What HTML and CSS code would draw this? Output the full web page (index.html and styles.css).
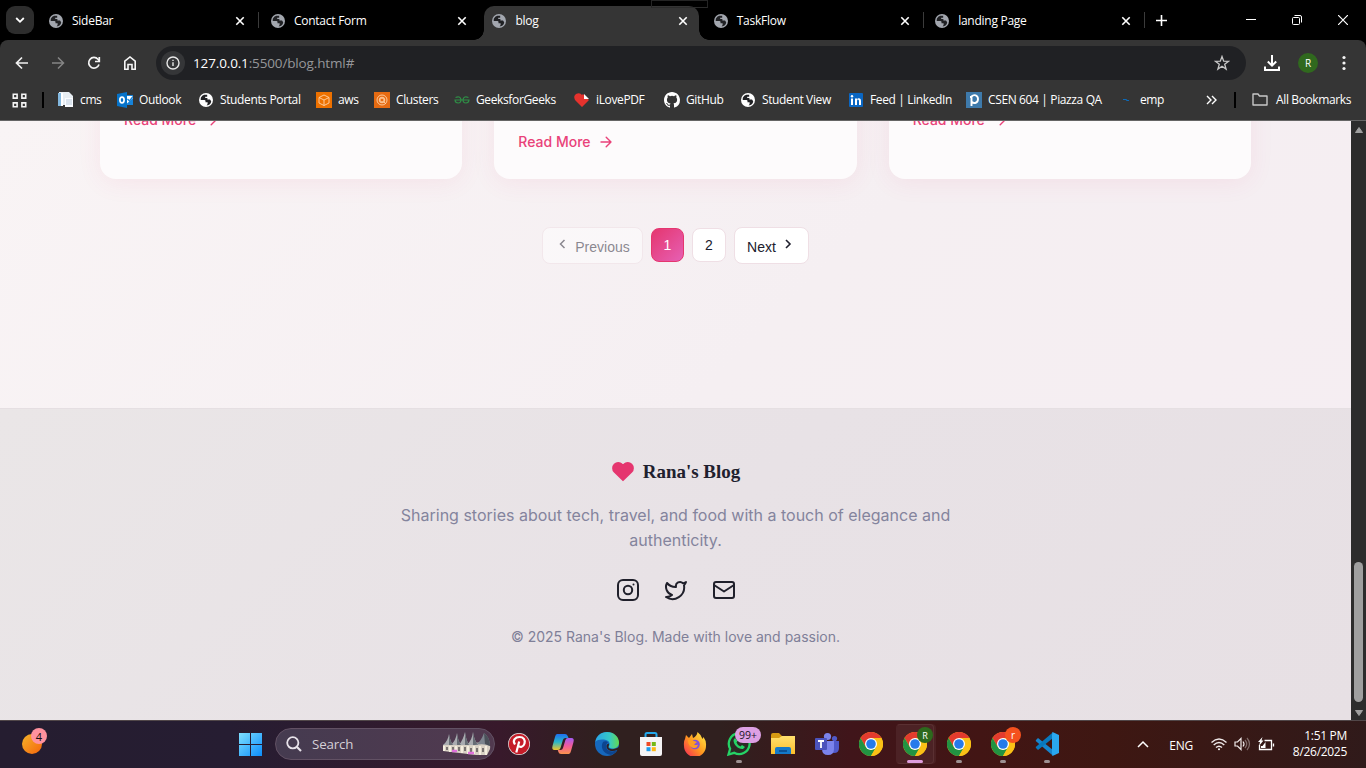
FILE: index.html
```html
<!DOCTYPE html>
<html lang="en">
<head>
<meta charset="utf-8">
<title>blog</title>
<link rel="stylesheet" href="styles.css">
</head>
<body>
<svg class="defs" width="0" height="0" aria-hidden="true">
  <defs>
    <linearGradient id="win" x1="0" y1="0" x2="1" y2="1"><stop offset="0" stop-color="#7fe0ff"/><stop offset="1" stop-color="#0c8dfb"/></linearGradient>
    <linearGradient id="edge" x1="0" y1="0" x2="1" y2="0"><stop offset="0" stop-color="#2aa5e8"/><stop offset=".6" stop-color="#35c9c5"/><stop offset="1" stop-color="#64d950"/></linearGradient>
    <linearGradient id="copA" x1="0" y1="0" x2="0" y2="1"><stop offset="0" stop-color="#1e6ff0"/><stop offset=".5" stop-color="#28b7c9"/><stop offset="1" stop-color="#f1c52a"/></linearGradient>
    <linearGradient id="copB" x1="0" y1="0" x2="0" y2="1"><stop offset="0" stop-color="#a35bf5"/><stop offset=".5" stop-color="#f25b9a"/><stop offset="1" stop-color="#fb934c"/></linearGradient>
    <linearGradient id="fox" x1="1" y1="0" x2="0" y2="1"><stop offset="0" stop-color="#fff14a"/><stop offset=".5" stop-color="#ff9a1f"/><stop offset="1" stop-color="#f5205a"/></linearGradient>
    <linearGradient id="orange" x1="0" y1="0" x2="1" y2="1"><stop offset="0" stop-color="#f5b52a"/><stop offset="1" stop-color="#f4640c"/></linearGradient>
    <linearGradient id="folder" x1="0" y1="0" x2="0" y2="1"><stop offset="0" stop-color="#ffe06f"/><stop offset="1" stop-color="#fcbf2a"/></linearGradient>
  </defs>
  <symbol id="globe" viewBox="0 0 14 14"><circle cx="7" cy="7" r="7" fill="currentColor"/><path class="land" d="M5.2 1.8Q3 2.5 1.8 4.800L1.700 7H5.400Q6.500 7 6.500 8v1.200H8.600V11l-1 1.500Q11.800 12 12.200 8.200L11 6.600H8.400V5H6.200V3.800H8.200V1.700Z"/></symbol>
  <symbol id="x" viewBox="0 0 10 10"><path d="M1.300 1.300 8.700 8.700M8.700 1.300 1.300 8.700" fill="none" stroke="#fff" stroke-width="1.600"/></symbol>
  <symbol id="chrome" viewBox="0 0 24 24"><circle cx="12" cy="12" r="12" fill="#fbc116"/><path d="M1.600 6A12 12 0 0 1 22.400 6H12L6.800 15Z" fill="#e33b2e"/><path d="M1.600 6A12 12 0 0 0 12 24L17.200 15 12 18 6.800 15Z" fill="#229342"/><path d="M12 6H22.400A12 12 0 0 1 12 24L17.200 15Z" fill="#fbc116"/><circle cx="12" cy="12" r="6" fill="#fff"/><circle cx="12" cy="12" r="4.800" fill="#267aea"/></symbol>
  <symbol id="arrow" viewBox="0 0 12 12"><path d="M1 6h10M6.200 1.200 11 6l-4.800 4.800" fill="none" stroke="currentColor" stroke-width="1.400" stroke-linecap="round" stroke-linejoin="round"/></symbol>
</svg>

<header class="tabs">
  <button class="tab-search"><svg width="10" height="8" viewBox="0 0 10 8"><path d="m1.200 2 3.800 3.800L8.800 2" fill="none" stroke="#fff" stroke-width="1.800"/></svg></button>
  <div class="tab"><svg class="fav"><use href="#globe"/></svg><span>SideBar</span><svg class="close"><use href="#x"/></svg></div>
  <div class="tab no-rule"><svg class="fav"><use href="#globe"/></svg><span>Contact Form</span><svg class="close"><use href="#x"/></svg></div>
  <div class="tab active"><svg class="fav"><use href="#globe"/></svg><span>blog</span><svg class="close"><use href="#x"/></svg></div>
  <div class="tab"><svg class="fav"><use href="#globe"/></svg><span>TaskFlow</span><svg class="close"><use href="#x"/></svg></div>
  <div class="tab"><svg class="fav"><use href="#globe"/></svg><span>landing Page</span><svg class="close"><use href="#x"/></svg></div>
  <svg class="plus" width="11" height="11" viewBox="0 0 11 11"><path d="M5.500 0v11M0 5.500h11" stroke="#fff" stroke-width="1.600"/></svg>
  <div class="window-buttons">
    <svg width="10" height="10"><path d="M0 4.500h10" stroke="#fff"/></svg>
    <svg width="10" height="10" viewBox="0 0 10 10" fill="none" stroke="#fff"><rect x=".5" y="2.500" width="7" height="7" rx="1"/><path d="M2.500.5H8Q9.500.5 9.500 2V7.500"/></svg>
    <svg width="10" height="10" viewBox="0 0 10 10"><path d="m0 0 10 10M10 0 0 10" stroke="#fff" stroke-width="1.200"/></svg>
  </div>
  <div class="grip"></div>
</header>

<div class="toolbar">
  <div class="nav-row">
    <svg width="14" height="14" viewBox="0 0 14 14" fill="none" stroke="#f0f0f0" stroke-width="1.700"><path d="M13 7H1.800M7 1.500 1.500 7 7 12.500"/></svg>
    <svg width="14" height="14" viewBox="0 0 14 14" fill="none" stroke="#858585" stroke-width="1.500"><path d="M1 7h11.500M7 1.500 12.500 7 7 12.500"/></svg>
    <svg width="14" height="14" viewBox="0 0 14 14" fill="none" stroke="#f5f5f5" stroke-width="1.700"><path d="M12 8.500A5.300 5.300 0 1 1 11 3.300L12.500 5"/><path d="M12.300 1v4.500H8"/></svg>
    <svg width="14" height="14" viewBox="0 0 14 14" fill="none" stroke="#f5f5f5" stroke-width="1.600"><path d="M1.800 13.200V5.200L7 1l5.200 4.200v8H9V8.500H5v4.700Z"/></svg>
    <div class="omnibox">
      <span class="info"><svg width="14" height="14" viewBox="0 0 14 14"><circle cx="7" cy="7" r="6" fill="none" stroke="#e8e8e8" stroke-width="1.400"/><path d="M7 6.200V10M7 3.700V5.100" stroke="#e8e8e8" stroke-width="1.400"/></svg></span>
      <span class="url"><b>127.0.0.1</b>:5500/blog.html#</span>
      <svg class="star" width="16" height="16" viewBox="0 0 16 16"><path d="m8 1.500 1.700 4.700 4.900.1-3.900 3 1.400 4.800L8 11.300l-4.100 2.800 1.400-4.800-3.900-3 4.900-.1Z" fill="none" stroke="#c7c7c7" stroke-width="1.300"/></svg>
    </div>
    <svg width="16" height="17" viewBox="0 0 16 17" fill="none" stroke="#fff" stroke-width="2"><path d="M8 0v10.500M3.800 6.500 8 10.700l4.200-4.200M1 11.500V15h14v-3.500"/></svg>
    <span class="profile">R</span>
    <svg width="4" height="16" fill="#f5f5f5"><circle cx="2" cy="2.500" r="1.600"/><circle cx="2" cy="8" r="1.600"/><circle cx="2" cy="13.500" r="1.600"/></svg>
  </div>
  <nav class="bookmarks">
    <svg width="15" height="15" viewBox="0 0 15 15" fill="none" stroke="#f5f5f5" stroke-width="1.600"><path d="M1.300 1.300h3.800v3.800H1.300zM9.900 1.300h3.800v3.800H9.900zM1.300 9.900h3.800v3.800H1.300zM9.900 9.900h3.800v3.800H9.900z"/></svg>
    <i class="rule"></i>
    <a><svg width="16" height="16" viewBox="0 0 16 16"><path d="M1 0h10l4 4v9H1Z" fill="#e7edf2"/><path d="M0 1h4v13H0z" fill="#82b7de"/><path d="M3 1h2v13H3z" fill="#fff"/><path d="M7 6h8v9H7z" fill="#fafcff"/><path d="M8 8h6M8 10h6M8 12h6" stroke="#bacada"/></svg><span>cms</span></a>
    <a><svg width="16" height="16" viewBox="0 0 16 16"><path d="M0 2 10 0v16L0 14Z" fill="#0673c9"/><path d="M10 3h6v10h-6" fill="#fff"/><path d="M10 11.500 16 6v7h-6M10 3h6v1h-6" fill="#1683da"/><path d="m10.500 7 2 2L16 4.500" fill="none" stroke="#1683da" stroke-width="1.300"/><ellipse cx="5" cy="8" rx="2.100" ry="2.800" fill="none" stroke="#fff" stroke-width="1.700"/></svg><span>Outlook</span></a>
    <a><svg class="fav light"><use href="#globe"/></svg><span>Students Portal</span></a>
    <a><svg width="16" height="16" viewBox="0 0 16 16"><path fill="#ed7100" d="M0 0h16v16H0z"/><path d="m8 3 5 2.500v5.500l-5 2.500L3 11V5.500ZM3 5.500 8 8l5-2.500M8 8v5.500" fill="none" stroke="#ffd3a8" stroke-width=".9"/></svg><span>aws</span></a>
    <a><svg width="16" height="16" viewBox="0 0 16 16"><path fill="#e66b12" d="M0 0h16v16H0z"/><g fill="none" stroke="#ffd3a8" stroke-width=".9"><circle cx="8" cy="8" r="5"/><circle cx="8" cy="8" r="2.800"/><path d="m8 6 2 1v2L8 10 6 9V7ZM10 10l2 2"/></g></svg><span>Clusters</span></a>
    <a><svg width="16" height="16" viewBox="0 0 16 16" fill="none" stroke="#2f8d46" stroke-width="1.200"><path d="M1.500 5.500Q6 3.500 7 7.500q0 3.500-2.800 3.500Q1.200 11 1 8h14q-.2 3-3.200 3Q9 11 9 7.500q1-4 5.500-2"/></svg><span>GeeksforGeeks</span></a>
    <a><svg width="16" height="16" viewBox="0 0 16 16"><path d="M8 15 1 8Q-1 4 2 2q4-2 6 1l1-1 6 6Z" fill="#e5322d"/><path d="m10 2 5 5h-5Z" fill="#fff"/></svg><span>iLovePDF</span></a>
    <a><svg width="16" height="16" viewBox="0 0 16 16"><path fill="#fff" d="M8 0C3.580 0 0 3.580 0 8c0 3.540 2.290 6.530 5.470 7.590.4.070.55-.17.55-.38 0-.19-.01-.82-.01-1.490-2.010.37-2.530-.49-2.690-.94-.09-.23-.48-.94-.82-1.130-.28-.15-.68-.52-.01-.53.63-.01 1.080.58 1.230.82.72 1.210 1.870.87 2.330.66.07-.52.28-.87.51-1.070-1.780-.2-3.640-.89-3.640-3.950 0-.87.31-1.590.82-2.150-.08-.2-.36-1.020.08-2.120 0 0 .67-.21 2.200.82a7.500 7.500 0 0 1 4 0c1.530-1.040 2.200-.82 2.200-.82.44 1.100.16 1.920.08 2.120.51.56.82 1.270.82 2.150 0 3.070-1.870 3.750-3.650 3.950.29.25.54.73.54 1.480 0 1.070-.01 1.930-.01 2.200 0 .21.15.46.55.38A8 8 0 0 0 16 8c0-4.420-3.580-8-8-8Z"/></svg><span>GitHub</span></a>
    <a><svg class="fav light"><use href="#globe"/></svg><span>Student View</span></a>
    <a class="linkedin"><svg width="14" height="14" viewBox="0 0 14 14"><rect width="14" height="14" rx="1" fill="#0a66c2"/><path d="M2 5.500h2V12H2zM6 5.500h2V12H6zM8 8q0-2 1.500-1.200.5.300.5 1.500V12h2V8q0-3-2.500-2.800Q8.500 5.300 8 6.500Z" fill="#fff"/><circle cx="3" cy="3.200" r="1.200" fill="#fff"/></svg><span>Feed | LinkedIn</span></a>
    <a><svg width="16" height="16" viewBox="0 0 16 16"><path fill="#3e7aab" d="M0 0h16v16H0z"/><path d="M5.500 14V5H4M5.500 4.500C8 2 12 3 12 7s-4 5-6 3" fill="none" stroke="#fff" stroke-width="1.900"/></svg><span>CSEN 604 | Piazza QA</span></a>
    <a class="emp"><svg width="8" height="4" viewBox="0 0 8 4"><path d="M1 1.500h3l1 1h2" stroke="#0d6ab8" stroke-width="1.200" fill="none"/></svg><span>emp</span></a>
    <svg width="11" height="10" viewBox="0 0 11 10"><path d="m1 1 4 4-4 4M6 1l4 4-4 4" fill="none" stroke="#fff" stroke-width="1.400"/></svg>
    <i class="rule"></i>
    <a><svg width="16" height="13" viewBox="0 0 16 13"><path d="M1 1h5l1.500 2H15v9H1Z" fill="none" stroke="#c7c7c7" stroke-width="1.400" stroke-linejoin="round"/></svg><span>All Bookmarks</span></a>
  </nav>
</div>

<div class="view">
  <div class="page">
    <main>
      <div class="cards">
        <article class="card"><a class="more early">Read More<svg width="12" height="12"><use href="#arrow"/></svg></a></article>
        <article class="card"><a class="more">Read More<svg width="12" height="12"><use href="#arrow"/></svg></a></article>
        <article class="card"><a class="more early">Read More<svg width="12" height="12"><use href="#arrow"/></svg></a></article>
      </div>
      <div class="pagination">
        <button class="step prev"><svg width="16" height="16" viewBox="0 0 16 16"><path d="M9.500 4 5.500 8l4 4" fill="none" stroke="currentColor" stroke-width="1.500"/></svg><span>Previous</span></button>
        <button class="number current">1</button>
        <button class="number">2</button>
        <button class="step next"><span>Next</span><svg width="16" height="16" viewBox="0 0 16 16"><path d="m6 4 4 4-4 4" fill="none" stroke="currentColor" stroke-width="1.600"/></svg></button>
      </div>
    </main>
    <footer>
      <div class="brand"><svg width="24" height="24" viewBox="0 0 24 24"><path d="M20.500 4.300a5.500 5.500 0 0 0-7.500 0l-1 .8-1-.8a5.500 5.500 0 0 0-7.500 0 5.500 5.500 0 0 0 0 7.700L12 20.300l8.500-8.300a5.500 5.500 0 0 0 0-7.700Z" fill="#e5366f" stroke="#e5366f" stroke-width="1.600" stroke-linejoin="round"/></svg><span>Rana's Blog</span></div>
      <p class="tagline">Sharing stories about tech, travel, and food with a touch of elegance and authenticity.</p>
      <div class="social">
        <svg viewBox="0 0 24 24"><rect x="2" y="2" width="20" height="20" rx="5"/><circle cx="12" cy="12" r="4.200"/><path d="M17.500 6.500h.01"/></svg>
        <svg viewBox="0 0 24 24"><path d="M22 4s-.7 2.100-2 3.400c1.600 10-9.400 17.300-18 11.600 2.200.1 4.400-.6 6-2C3 15.500.5 9.600 3 5c2.200 2.600 5.600 4.100 9 4-.9-4.200 4-6.600 7-3.800 1.100 0 3-1.200 3-1.200Z"/></svg>
        <svg viewBox="0 0 24 24"><rect x="2" y="4" width="20" height="16" rx="2"/><path d="m2 7 10 6.500L22 7"/></svg>
      </div>
      <p class="copy">© 2025 Rana's Blog. Made with love and passion.</p>
    </footer>
  </div>
  <div class="scrollbar">
    <svg width="10" height="8"><path d="M5 1.500 8.500 6.500H1.500Z" fill="#a0a0a0" stroke="#a0a0a0" stroke-linejoin="round"/></svg>
    <i class="thumb"></i>
    <svg width="10" height="8"><path d="M5 6.500 1.500 1.500h7Z" fill="#a0a0a0" stroke="#a0a0a0" stroke-linejoin="round"/></svg>
  </div>
</div>

<div class="taskbar">
  <div class="weather"><svg width="20" height="20"><circle cx="10" cy="10" r="10" fill="url(#orange)"/></svg><span class="badge pink">4</span></div>
  <svg class="start" width="23" height="23" viewBox="0 0 23 23"><path d="M0 0h11v11H0zM12 0h11v11H12zM0 12h11v11H0zM12 12h11v11H12z" fill="url(#win)"/></svg>
  <div class="search">
    <svg width="16" height="16" viewBox="0 0 16 16" fill="none" stroke="#e8e3ea" stroke-width="1.800"><circle cx="6.800" cy="6.800" r="5.600"/><path d="m11 11 4 4" stroke-width="2.200"/></svg>
    <span>Search</span>
    <svg width="50" height="26" viewBox="0 0 50 26">
      <path d="M1 14 45 11q4 2 3 7l-3 6H34L1 20Z" fill="#d8d0c4"/>
      <path d="M1 14Q6 10 7 3q1 7 4 11ZM9 14q5-5 6-12 1 8 4 12ZM17 14q4-5 6-13 1 8 4 13ZM25 14q5-5 6-13 1 8 5 13Z" fill="#a9abb0"/>
      <path d="M7 14V3q1 7 4 11ZM15 14V2q1 8 4 12ZM23 14V1q1 8 4 13ZM31 14V1q1 8 5 13Z" fill="#666c74"/>
      <path d="M33 14q6-3 9-12 6 4 6 13-6-3-15-1Z" fill="#7c848e"/><path d="M42 2q6 4 6 13l-5-2Z" fill="#4b515a"/>
      <path d="M2 15v5M8 15v6M14 15v6M20 15v7M26 15v8M32 15v8M38 15v9M44 15v9" stroke="#f5eedf" stroke-width="2"/>
      <path d="M5 16v3M11 16v4M17 16v4M23 16v4M29 17v4M35 17v4M41 17v4" stroke="#454044" stroke-width="1.300"/>
      <path d="M10 20h5M26 22h6" stroke="#df70dc" stroke-width="2.500"/>
    </svg>
  </div>
  <div class="apps">
    <div class="app"><svg viewBox="0 0 24 24"><circle cx="12" cy="12" r="11" fill="#e4e0e1"/><circle cx="12" cy="12" r="10.300" fill="#c51c29"/><path d="m9.300 20.500 2.900-11M8 12.500C5 8 8.500 5 12.500 5c4 0 6 3 5 6.500-1 3.500-4.500 4.500-6.200 2" fill="none" stroke="#fff" stroke-width="2.200"/></svg></div>
    <div class="app"><svg viewBox="0 0 24 24"><path d="M6 2h8q2 0 2.700 2l.8 2h-3q-2 0-2.600 2L9.500 16q-.5 2-2.500 2H3.500Q.5 18 1.500 14L4 5Q4.700 2 6 2Z" fill="url(#copA)"/><path d="M18 22h-8q-2 0-2.600-2L6.800 18h2.700q2 0 2.500-2l2.400-8q.6-2 2.600-2h3.500q3 0 2 4L20 19q-.7 3-2 3Z" fill="url(#copB)"/></svg></div>
    <div class="app"><svg viewBox="0 0 24 24"><circle cx="12" cy="12" r="12" fill="#1668bd"/><path d="M.4 10C1 4 6 0 12 0c7 0 12 5 12 10.500 0 4-3 6-6 6-2.800 0-4.700-1-4-2.500 1.500-2 .5-5-3-6C7 7 2 7.500.4 10Z" fill="url(#edge)"/><path d="M8 10c-3 5 0 12 8 13 3-1 5.200-3 6-5-5 3-11 1-11-4 0-2 1-3 2-3.500C12 9 9 9 8 10Z" fill="#0d458f"/><path d="M13.500 11.500c1.500 1.500-1.200 3.300.5 4.700 2 1.500 6 1.300 10-1.200v3.500q-1 .5-2-.5c-5 2.500-10.500.5-10.500-4 0-1.200.8-2 2-2.500Z" fill="#30201f"/></svg></div>
    <div class="app"><svg viewBox="0 0 24 24"><path d="M6.500 6V2.500q0-1.500 1.500-1.500h8q1.500 0 1.500 1.500V6" fill="none" stroke="#22a8ec" stroke-width="2"/><path d="M1 5h22v17q0 2-2 2H3q-2 0-2-2Z" fill="#f5f4f5"/><path d="M7.500 10h4v4h-4z" fill="#ef4a24"/><path d="M12.800 10h4v4h-4z" fill="#74b816"/><path d="M7.500 15.200h4v4h-4z" fill="#1d9bea"/><path d="M12.800 15.200h4v4h-4z" fill="#fdb813"/></svg></div>
    <div class="app"><svg viewBox="0 0 24 24"><path d="M2 7 3 3l3 3 3-4 1 4Q14 4 14.500 0q4 3 5 7l1-2q3 4 2.500 9a11 11 0 0 1-22 0Q.500 9 2 7Z" fill="url(#fox)"/><circle cx="12" cy="12.500" r="4.800" fill="#8252d7"/><path d="M5 8q4-1 6 1l3 1-3 2.500q2 1 4 0-1 5-6 3-4-2-4-7.500Z" fill="#ff9d22"/></svg></div>
    <div class="app running"><svg viewBox="0 0 24 24"><path d="m1.500 22.500 1.600-5.800a10.400 10.400 0 1 1 4.100 4.100Z" fill="#2b2b25" stroke="#25d366" stroke-width="2.300"/><path d="M8 6 6.500 8c0 5 5 9.500 9.500 9l2-2-3-2-1.500 1.500q-3-1-4-4L10.500 9Z" fill="#25d366"/></svg><span class="badge count">99+</span></div>
    <div class="app"><svg viewBox="0 0 24 24"><path d="M0 3q0-2 2-2h6l3 3h11q2 0 2 2v5H0Z" fill="#d69a13"/><path d="M0 6h8l3-2h13v18H0Z" fill="url(#folder)"/><path d="M4 22v-5q0-2 2-2h12q2 0 2 2v5Z" fill="#1479c8"/><path d="M8 19h8" stroke="#0b5295" stroke-width="2"/></svg></div>
    <div class="app"><svg viewBox="0 0 24 24"><circle cx="19.500" cy="6.500" r="2.600" fill="#5059c9"/><circle cx="12.500" cy="4.500" r="3.600" fill="#7b83eb"/><path d="M16 9h8v7q0 5-5 5-3 0-4-2Z" fill="#5059c9"/><path d="M7 9h12v8q0 6-6 6T7 17Z" fill="#7b83eb"/><rect y="6" width="12" height="12" rx="1" fill="#4b53bc"/><path d="M3 9h6M6 9v7" stroke="#fff" stroke-width="1.800"/></svg></div>
    <div class="app"><svg><use href="#chrome"/></svg></div>
    <div class="app running focused"><svg><use href="#chrome"/></svg><span class="badge green">R</span></div>
    <div class="app running"><svg><use href="#chrome"/></svg></div>
    <div class="app running"><svg><use href="#chrome"/></svg><span class="badge red">r</span></div>
    <div class="app running"><svg viewBox="0 0 24 24"><path d="m1 8 2-2 15 12v5.800L.700 9Z" fill="#1685ce"/><path d="m1 16 2 2L18 6V.200L.700 15Z" fill="#0878bd"/><path d="m17.500 0 6.500 3v18l-6.500 3-.500-3V3Z" fill="#2aa8f0"/></svg></div>
  </div>
  <div class="tray">
    <svg width="12" height="8"><path d="m1 7 5-5 5 5" fill="none" stroke="#fff" stroke-width="1.500"/></svg>
    <span class="lang">ENG</span>
    <svg width="16" height="13" viewBox="0 0 16 13" fill="none" stroke="#f0eaea" stroke-width="1.400"><path d="M.500 4.500q7.500-7 15 0M2.700 7q5.300-5 10.600 0M5 9.500q3-2.700 6 0"/><circle cx="8" cy="11.300" r="1" fill="#fff" stroke="none"/></svg>
    <svg width="17" height="14" viewBox="0 0 17 14" fill="none" stroke="#f0eaea" stroke-width="1.200"><path d="M1 5h2.500L7 1.500v11L3.500 9H1Z"/><path d="M9 4.500q2 2.500 0 5"/><path d="M11 3q3.500 4 0 8M13 1q5 6 0 12" stroke="#806d6b"/></svg>
    <svg width="17" height="15" viewBox="0 0 17 15" fill="none" stroke="#fff" stroke-width="1.300"><path d="M6.500 3.500h7v9h-12V8M15.500 6.500v3"/><path d="M3 11V9h1.500L7.500 5v6Z" fill="#fff" stroke="none"/><path d="M4.500 0 0 5h2L1 9l4.500-5.500h-2Z" fill="#fff" stroke="none"/></svg>
    <div class="clock"><span>1:51 PM</span><span>8/26/2025</span></div>
  </div>
</div>
</body>
</html>
```
FILE: styles.css
```css
* { box-sizing: border-box; }
body {
  margin: 0;
  width: 1366px;
  height: 768px;
  overflow: hidden;
  background: #353535;
  color: #fff;
  font: 12px "Open Sans", "Noto Sans", sans-serif;
  display: flex;
  flex-direction: column;
}
svg { display: block; flex: none; }
.defs { position: absolute; }
button { border: 0; padding: 0; background: none; font: inherit; color: inherit; }
p { margin: 0; }

/* tab strip */
.tabs { height: 40px; flex: none; display: flex; background: #000; position: relative; z-index: 1; }
.tab-search {
  width: 28px; height: 28px; margin: 6px 4px 0 6px; border-radius: 9px; background: #2d2d2d;
  display: grid; place-items: center;
}
.tab {
  width: 221.400px; height: 34px; margin-top: 6px; padding: 0 14px 5px 11px;
  display: flex; align-items: center; letter-spacing: -.26px; position: relative;
}
.tab:not(:nth-child(2)) { padding-left: 11.600px; }
.tab:not(.no-rule):not(.active)::after {
  content: ""; position: absolute; right: 0; top: 6px; width: 1px; height: 16px; background: #3b3b3b;
}
.tab span { margin-left: 9px; flex: 1; }
.fav { width: 14px; height: 14px; color: #a3a7af; }
.land { fill: #202124; }
.light { color: #fff; margin: 0 1px; }
.close { width: 10px; height: 10px; }
.active::before {
  content: ""; position: absolute; z-index: 0; inset: 0 3px 0 3px;
  background: #353535; border-radius: 10px 10px 0 0;
}
.active > * { position: relative; }
.active::after {
  content: ""; position: absolute; left: -7px; right: -7px; bottom: 0; height: 10px;
  background:
    radial-gradient(circle at 0 0, #0000 9.500px, #353535 10px) left / 10px 10px no-repeat,
    radial-gradient(circle at 100% 0, #0000 9.500px, #353535 10px) right / 10px 10px no-repeat;
}
.plus { margin: 15px 0 0 11px; }
.window-buttons { margin: 15px 18px 0 auto; display: flex; gap: 36px; }
.grip { position: absolute; left: 651px; top: 0; width: 57px; height: 8px; border: 1px solid #242424; border-bottom-color: #2b2b2b; }

/* toolbar */
.toolbar { height: 81px; flex: none; border-bottom: 1px solid #656565; border-radius: 8px 8px 0 0; background: #353535; box-shadow: 0 -8px #000; }
.nav-row {
  height: 46px; display: grid; align-items: center;
  grid-template-columns: 36px 36px 36px 33px 1108px 33px 45px 10px; padding-left: 15px;
}
.omnibox { width: 1090px; height: 34px; border-radius: 17px; background: #202124; display: flex; align-items: center; padding: 0 16px 0 5px; }
.info { width: 24px; height: 24px; border-radius: 50%; background: #353638; display: grid; place-items: center; }
.url { margin-left: 8px; flex: 1; font-size: 13.500px; color: #96979a; letter-spacing: -.14px; }
.url b { color: #fff; font-weight: 400; }
.profile { width: 20px; height: 20px; border-radius: 50%; background: #30691e; display: grid; place-items: center; font-size: 10px; margin-left: 1px; }
.bookmarks {
  height: 28px; display: grid; align-items: center; padding-left: 12px; white-space: nowrap;
  grid-template-columns: 30px 16px 59px 81px 118px 58px 80px 120px 90px 76px 109px 117px 156px 84px 28px 18px 110px;
  letter-spacing: -.37px;
}
.bookmarks a { display: flex; align-items: center; gap: 6px; margin-top: -1px; }
.bookmarks .linkedin { gap: 7px; }
.bookmarks > a:last-child { gap: 8px; }
.bookmarks .emp { gap: 10px; }
.rule { width: 2px; height: 16px; background: #000; }

/* blog page */
.view { height: 599px; flex: none; display: flex; }
.page {
  width: 1351px; overflow: hidden; color: #20202e; font-family: Inter, sans-serif;
  background: linear-gradient(135deg, #f9f4f5 0%, #f5eff2 50%, #f5edf2 100%);
  display: flex; flex-direction: column;
}
main { height: 287px; }
.cards { height: 58px; padding: 0 100px; display: grid; grid-template-columns: repeat(3, 1fr); gap: 32px; }
.card {
  margin-top: -40px; padding: 50px 24px 0; border-radius: 0 0 16px 16px;
  background: #fdfbfc; box-shadow: 0 4px 24px rgba(232, 62, 120, .08);
}
.more { display: flex; align-items: center; gap: 9px; line-height: 22px; font-size: 14px; font-weight: 500; color: #e94279; }
.early { margin-top: -22px; }
.pagination { margin-top: 48px; display: flex; justify-content: center; align-items: flex-start; gap: 8px; font: 14px "Liberation Sans", Arial, sans-serif; }
.pagination button { background: #fff; border: 1px solid #efdfe5; border-radius: 8px; display: flex; align-items: center; justify-content: center; }
.step { height: 37px; gap: 4px; }
.step svg { margin-top: -4px; }
.step span { margin-top: 2px; }
.pagination .prev { width: 101px; opacity: .5; }
.next { width: 75px; }
.pagination .number { width: 34px; height: 34px; margin-top: 1px; }
.pagination .current { width: 33px; color: #fff; background: linear-gradient(135deg, #e5366f, #e660b4); border-color: #e5366f; }

footer {
  height: 312px; border-top: 1px solid #e5dfe2; padding-top: 50px;
  display: flex; flex-direction: column; align-items: center;
  background: linear-gradient(135deg, #eae6e7 0%, #e8e2e6 50%, #e7e0e4 100%);
}
.brand { height: 25px; display: flex; align-items: center; gap: 8px; font: bold 19px "Liberation Serif", serif; }
.tagline { width: 600px; margin-top: 19px; text-align: center; font-size: 16px; line-height: 25px; color: #84849d; }
.social { display: flex; gap: 24px; margin-top: 25px; }
.social svg { width: 24px; height: 24px; fill: none; stroke: #20202b; stroke-width: 2; stroke-linecap: round; stroke-linejoin: round; }
.copy { margin-top: 24px; font-size: 14px; line-height: 22px; color: #7f7f98; }

.scrollbar { width: 15px; background: #2c2c2c; display: flex; flex-direction: column; align-items: center; padding: 5px 0 3px; }
.thumb { width: 9px; height: 140px; margin: auto 0 7px; border-radius: 5px; background: #9f9f9f; }

/* taskbar */
.taskbar {
  height: 48px; flex: none; border-top: 1px solid #514749; display: flex; align-items: center; padding-bottom: 1px;
  background: linear-gradient(90deg, #251d30 0, #261d32 230px, #38192b 500px, #30201f 600px, #30201f 720px, #40151a 850px, #421514 980px, #3e1712 1110px, #301a1a 1366px);
}
.weather { width: 239px; padding-left: 22px; position: relative; }
.search {
  width: 220px; height: 32px; margin-left: 13px; padding: 0 2px 0 10px; display: flex; align-items: center;
  border: 1px solid #625164; border-radius: 16px; background: linear-gradient(90deg, #453b50, #51394f);
}
.search span { flex: 1; margin-left: 10px; font-size: 13.300px; letter-spacing: -.15px; color: #d5cfd7; }
.apps { display: flex; margin-left: 2px; }
.app { width: 38px; height: 40px; margin: 0 3px; display: grid; place-items: center; position: relative; border-radius: 4px; }
.apps svg { width: 24px; height: 24px; }
.running::after { content: ""; position: absolute; left: 16px; bottom: 1px; width: 6px; height: 3px; border-radius: 2px; background: #9e9192; }
.focused { background: #4c2225; border: 1px solid #5a3032; border-left-color: #4c2225; box-shadow: 2px 0 #4b2022; }
.focused::after { left: 10px; bottom: 0; width: 16px; background: #df9ddd; }
.badge { position: absolute; height: 16px; min-width: 16px; border-radius: 8px; display: grid; place-items: center; font-size: 11px; line-height: 1; }
.pink { left: 31px; top: -6px; background: #ff929e; color: #111; }
.count { left: 15px; top: 3px; width: 26px; background: #dda0e4; color: #201525; font-size: 10.500px; }
.green { left: 20px; top: 2px; background: #2d691d; font-size: 9px; }
.red { left: 21px; top: 3px; background: #f4511e; font-size: 10px; }
.tray { margin-left: auto; padding-right: 19px; display: flex; align-items: center; }
.lang { margin: 2px 18px 0 20px; letter-spacing: -.2px; }
.tray svg + svg { margin-left: 7px; }
.clock { margin-left: 15px; width: 57px; display: flex; flex-direction: column; align-items: flex-end; font-size: 12px; line-height: 16px; letter-spacing: -.3px; white-space: nowrap; }
```
